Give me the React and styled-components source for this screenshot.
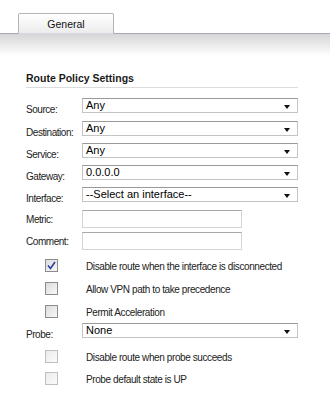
import React from 'react';
import styled, { createGlobalStyle } from 'styled-components';

const GlobalStyle = createGlobalStyle`
  html, body {
    margin: 0;
    padding: 0;
    background: #fff;
  }
  body {
    font-family: "Liberation Sans", Arial, sans-serif;
    color: #222;
  }
`;

const Page = styled.div`
  width: 330px;
  height: 394px;
  overflow: hidden;
  background: #fff;
`;

const TabStrip = styled.div`
  height: 34px;
  display: flex;
  align-items: flex-end;
  padding-left: 18px;
  border-bottom: 1px solid #a9a9be;
  box-sizing: border-box;
`;

const Tab = styled.div`
  width: 96px;
  height: 21px;
  box-sizing: border-box;
  border: 1px solid #b4b4b4;
  border-bottom: 1px solid #d6d6ea;
  border-radius: 2px 2px 0 0;
  background: linear-gradient(#ffffff, #ececec);
  display: flex;
  align-items: center;
  justify-content: center;
  font-size: 10.5px;
  color: #111;
  margin-bottom: -1px;
`;

const Band = styled.div`
  height: 22px;
  background: linear-gradient(#d6d6d6, #ffffff);
`;

const Section = styled.div`
  padding: 16px 0 0 26px;
  width: 272px;
`;

const Title = styled.div`
  font-size: 10.5px;
  font-weight: bold;
  color: #1a1a1a;
  padding-bottom: 3px;
  border-bottom: 1px solid #dcdcdc;
  margin-bottom: 10px;
`;

const Form = styled.div`
  display: flex;
  flex-direction: column;
`;

const Row = styled.div`
  height: ${p => p.$h}px;
  display: grid;
  grid-template-columns: 56px 1fr;
  align-items: start;
`;

const Label = styled.div`
  font-size: 10px;
  color: #222;
  padding-top: ${p => p.$top || 6}px;
  letter-spacing: -0.45px;
`;

const Select = styled.div`
  width: 216px;
  height: 15px;
  box-sizing: border-box;
  border: 1px solid #c4c4c4;
  border-top-color: #9a9a9a;
  background: #fff;
  position: relative;
  font-size: 11px;
  color: #000;
  padding: 1px 0 0 3px;
  line-height: 11px;
`;

const Arrow = styled.span`
  position: absolute;
  right: 7px;
  bottom: 3px;
  width: 0;
  height: 0;
  border-left: 3.5px solid transparent;
  border-right: 3.5px solid transparent;
  border-top: 4px solid #111;
`;

const TextInput = styled.div`
  width: 160px;
  height: 18px;
  box-sizing: border-box;
  border: 1px solid #d4d4d4;
  border-top-color: #a8a8a8;
  background: #fff;
`;

const CheckRow = styled.div`
  height: ${p => p.$h}px;
  display: flex;
  align-items: flex-start;
  padding-left: 19px;
`;

const Box = styled.span`
  width: 13px;
  height: 13px;
  box-sizing: border-box;
  border: 1px solid #8c8c8c;
  background: linear-gradient(135deg, #dcdcdc, #f8f8f8);
  display: flex;
  align-items: center;
  justify-content: center;
  flex-shrink: 0;
  opacity: ${p => (p.$dim ? 0.55 : 1)};
`;

const CheckText = styled.span`
  font-size: 10px;
  color: #222;
  margin-left: 28px;
  padding-top: 2px;
  letter-spacing: -0.4px;
  white-space: nowrap;
`;

const SelectRow = ({ label, value, h, top }) => (
  <Row $h={h}>
    <Label $top={top}>{label}</Label>
    <Select>
      {value}
      <Arrow />
    </Select>
  </Row>
);

const Check = ({ checked, dim, h, children }) => (
  <CheckRow $h={h}>
    <Box $dim={dim}>
      {checked && (
        <svg width="9" height="9" viewBox="0 0 9 9">
          <path d="M1 4.5 L3.5 7.5 L8 1" fill="none" stroke="#2a3fa0" strokeWidth="1.6" />
        </svg>
      )}
    </Box>
    <CheckText>{children}</CheckText>
  </CheckRow>
);

export default function App() {
  return (
    <Page>
      <GlobalStyle />
      <TabStrip>
        <Tab>General</Tab>
      </TabStrip>
      <Band />
      <Section>
        <Title>Route Policy Settings</Title>
        <Form>
          <SelectRow label="Source:" value="Any" h={23} />
          <SelectRow label="Destination:" value="Any" h={22} />
          <SelectRow label="Service:" value="Any" h={22} />
          <SelectRow label="Gateway:" value="0.0.0.0" h={22} />
          <SelectRow label="Interface:" value="--Select an interface--" h={23} />
          <Row $h={22}>
            <Label $top={4}>Metric:</Label>
            <TextInput />
          </Row>
          <Row $h={27}>
            <Label $top={4}>Comment:</Label>
            <TextInput />
          </Row>
          <Check checked h={23}>Disable route when the interface is disconnected</Check>
          <Check h={23}>Allow VPN path to take precedence</Check>
          <Check h={18}>Permit Acceleration</Check>
          <SelectRow label="Probe:" value="None" h={27} />
          <Check dim h={22}>Disable route when probe succeeds</Check>
          <Check dim h={22}>Probe default state is UP</Check>
        </Form>
      </Section>
    </Page>
  );
}
